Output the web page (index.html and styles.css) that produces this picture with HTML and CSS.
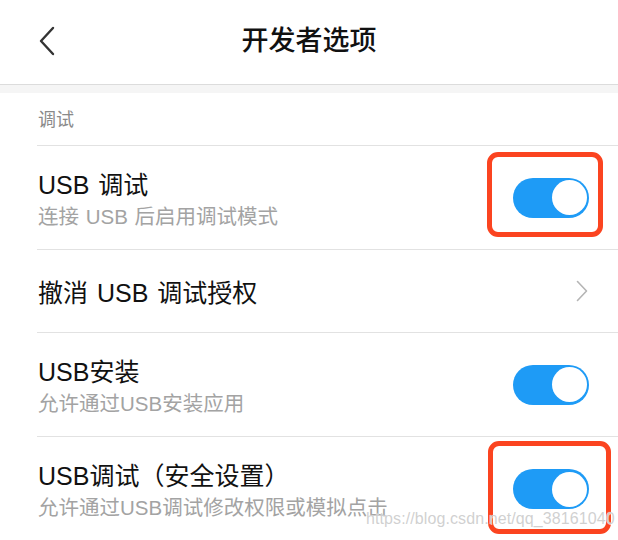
FILE: index.html
```html
<!DOCTYPE html>
<html lang="zh-CN">
<head>
<meta charset="utf-8">
<link rel="stylesheet" href="styles.css">
</head>
<body>
<div class="page">
  <header class="topbar">
    <svg class="back" width="18" height="30" viewBox="0 0 18 30"><path d="M15 2 L3 15 L15 28" fill="none" stroke="#333" stroke-width="2.4" stroke-linecap="round" stroke-linejoin="round"/></svg>
    <h1 class="title">开发者选项</h1>
  </header>
  <div class="gap"></div>
  <section class="list">
    <div class="section-label">调试</div>
    <div class="row tall">
      <div class="texts">
        <div class="main">USB 调试</div>
        <div class="sub">连接 USB 后启用调试模式</div>
      </div>
      <div class="switch-wrap">
        <span class="mark mark-a"></span>
        <span class="switch"><span class="knob"></span></span>
      </div>
    </div>
    <div class="row short">
      <div class="texts">
        <div class="main">撤消 USB 调试授权</div>
      </div>
      <svg class="chev" width="12" height="22" viewBox="0 0 12 22"><path d="M1.5 1.5 L10.5 11 L1.5 20.5" fill="none" stroke="#b5b5b5" stroke-width="1.6" stroke-linecap="round" stroke-linejoin="round"/></svg>
    </div>
    <div class="row tall">
      <div class="texts">
        <div class="main">USB安装</div>
        <div class="sub">允许通过USB安装应用</div>
      </div>
      <div class="switch-wrap">
        <span class="switch"><span class="knob"></span></span>
      </div>
    </div>
    <div class="row tall last">
      <div class="texts">
        <div class="main">USB调试（安全设置）</div>
        <div class="sub">允许通过USB调试修改权限或模拟点击</div>
      </div>
      <div class="switch-wrap">
        <span class="mark mark-b"></span>
        <span class="switch"><span class="knob"></span></span>
      </div>
    </div>
  </section>
  <div class="watermark">https://blog.csdn.net/qq_38161040</div>
</div>
</body>
</html>
```
FILE: styles.css
```css
* { box-sizing: border-box; }
html, body { margin: 0; padding: 0; background: #fff; }
body {
  font-family: "Liberation Sans", "Noto Sans CJK SC", sans-serif;
  color: #111;
}
.page {
  position: relative;
  width: 618px;
  height: 540px;
  overflow: hidden;
}
.topbar {
  position: relative;
  height: 85px;
  border-bottom: 1px solid #dcdcdc;
  display: flex;
  align-items: center;
  justify-content: center;
}
.back {
  position: absolute;
  left: 38px;
  top: 26px;
}
.title {
  margin: 0;
  font-size: 27px;
  font-weight: 500;
  color: #111;
  line-height: 1;
  padding-bottom: 2px;
}
.gap {
  height: 8px;
  background: #f5f5f5;
}
.list {
  padding-left: 37px;
}
.section-label {
  height: 53px;
  border-bottom: 1px solid #e2e2e2;
  font-size: 18px;
  color: #8a8a8a;
  display: flex;
  align-items: center;
  padding-left: 1px;
  padding-bottom: 2px;
}
.row {
  display: flex;
  align-items: center;
  justify-content: space-between;
  border-bottom: 1px solid #e2e2e2;
  padding-left: 1px;
  padding-right: 29px;
}
.row.tall { height: 104px; }
.row.short { height: 83px; padding-right: 30px; }
.row.last { border-bottom: none; }
.texts {
  display: flex;
  flex-direction: column;
}
.main {
  font-size: 25px;
  line-height: 30px;
  padding-top: 3px;
  color: #111;
  word-spacing: 2px;
}
.sub {
  font-size: 20.5px;
  line-height: 25px;
  color: #a3a3a3;
  margin-top: 4px;
  word-spacing: 1px;
}
.switch-wrap {
  position: relative;
  width: 76px;
  height: 40px;
}
.switch {
  display: flex;
  justify-content: flex-end;
  align-items: center;
  width: 76px;
  height: 40px;
  border-radius: 20px;
  background: #1e9bf6;
  padding: 0 2px;
}
.knob {
  width: 35px;
  height: 35px;
  border-radius: 50%;
  background: #fff;
}
.chev { display: block; }
.mark {
  position: absolute;
  border: 5px solid #fb4420;
  border-radius: 11px;
}
.mark-a {
  left: -26px;
  top: -26px;
  width: 116px;
  height: 85px;
}
.mark-b {
  left: -25px;
  top: -28px;
  width: 123px;
  height: 93px;
}
.watermark {
  position: absolute;
  z-index: 5;
  left: 366px;
  top: 509px;
  font-family: "Liberation Sans", Arial, sans-serif;
  font-size: 16px;
  line-height: 20px;
  letter-spacing: 0.1px;
  color: rgba(200, 200, 200, 0.85);
  text-shadow: 0 0 1px rgba(255,255,255,0.9), 1px 1px 0 rgba(255,255,255,0.6);
  white-space: nowrap;
}
```
